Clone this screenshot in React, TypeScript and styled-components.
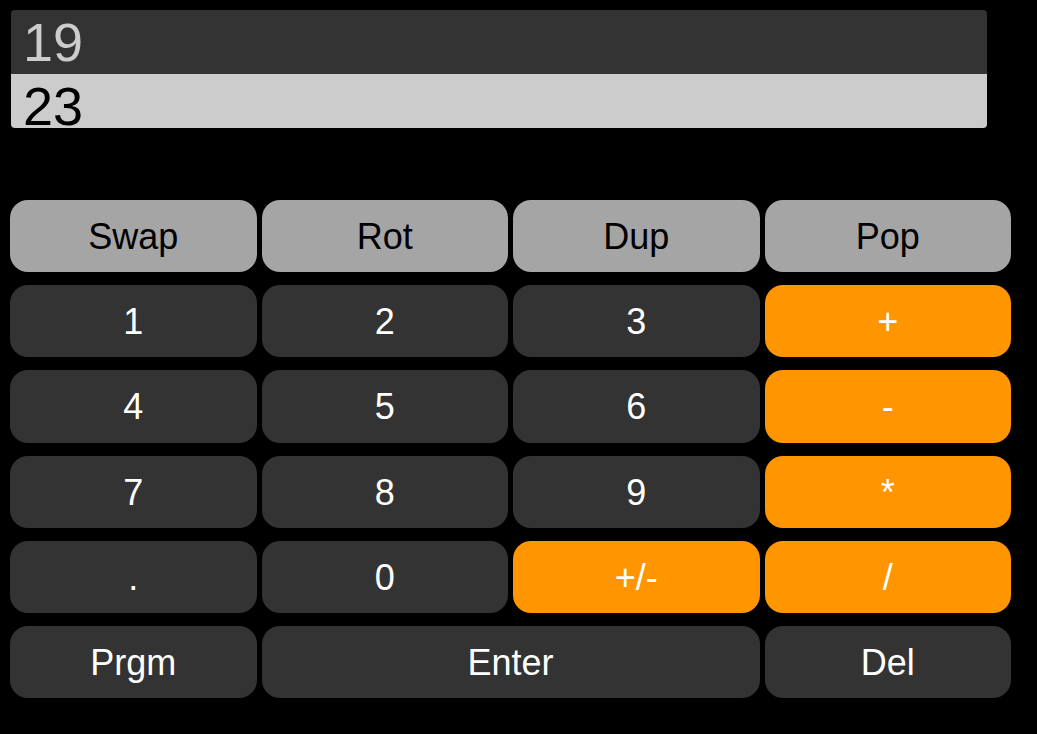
import React from "react";
import styled, { createGlobalStyle } from "styled-components";

const Global = createGlobalStyle`
  html, body { margin: 0; padding: 0; background: #000; }
  body { font-family: "Liberation Sans", Arial, sans-serif; }
`;

const Page = styled.div`
  padding: 10px 26px 0 10px;
  display: flex;
  flex-direction: column;
`;

const Display = styled.div`
  margin-left: 1px;
  width: 976px;
  height: 118px;
  border-radius: 4px;
  overflow: hidden;
  display: flex;
  flex-direction: column;
`;

const StackLine = styled.div<{ $active?: boolean }>`
  flex: 0 0 64px;
  height: 64px;
  background: ${(p) => (p.$active ? "#cccccc" : "#333333")};
  color: ${(p) => (p.$active ? "#000" : "#cccccc")};
  font-size: 54px;
  line-height: 64px;
  padding-left: 12px;
`;

const Keypad = styled.div`
  margin-top: 72px;
  width: 1001px;
  display: grid;
  grid-template-columns: repeat(4, 1fr);
  grid-auto-rows: 72.2px;
  column-gap: 5px;
  row-gap: 13px;
`;

type Kind = "stack" | "digit" | "op";

const Key = styled.button<{ $kind: Kind; $span?: number }>`
  grid-column: span ${(p) => p.$span ?? 1};
  border: none;
  border-radius: 18px;
  font-family: "Liberation Sans", Arial, sans-serif;
  font-size: 36px;
  padding: 2px 0 0;
  cursor: pointer;
  display: flex;
  align-items: center;
  justify-content: center;
  background: ${(p) =>
    p.$kind === "stack" ? "#a5a5a5" : p.$kind === "op" ? "#ff9500" : "#333333"};
  color: ${(p) => (p.$kind === "stack" ? "#000" : "#fff")};
`;

const keys: { label: string; kind: Kind; span?: number }[] = [
  { label: "Swap", kind: "stack" },
  { label: "Rot", kind: "stack" },
  { label: "Dup", kind: "stack" },
  { label: "Pop", kind: "stack" },
  { label: "1", kind: "digit" },
  { label: "2", kind: "digit" },
  { label: "3", kind: "digit" },
  { label: "+", kind: "op" },
  { label: "4", kind: "digit" },
  { label: "5", kind: "digit" },
  { label: "6", kind: "digit" },
  { label: "-", kind: "op" },
  { label: "7", kind: "digit" },
  { label: "8", kind: "digit" },
  { label: "9", kind: "digit" },
  { label: "*", kind: "op" },
  { label: ".", kind: "digit" },
  { label: "0", kind: "digit" },
  { label: "+/-", kind: "op" },
  { label: "/", kind: "op" },
  { label: "Prgm", kind: "digit" },
  { label: "Enter", kind: "digit", span: 2 },
  { label: "Del", kind: "digit" },
];

export default function App() {
  return (
    <>
      <Global />
      <Page>
        <Display>
          <StackLine>19</StackLine>
          <StackLine $active>23</StackLine>
        </Display>
        <Keypad>
          {keys.map((k) => (
            <Key key={k.label} $kind={k.kind} $span={k.span}>
              {k.label}
            </Key>
          ))}
        </Keypad>
      </Page>
    </>
  );
}
